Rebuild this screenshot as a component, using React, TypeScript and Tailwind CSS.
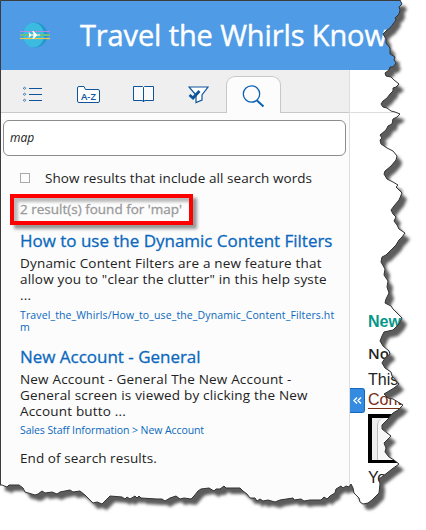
import React from "react";

const EDGE =
  "400,0 402,4 399,7 400,10 399,14 395,18 396,20 393,24 390,28 387,30 383,34 386,39 386,43 390,48 390,54 395,57 394,60 396,63 393,67 390,67 389,70 385,73 386,76 391,77 394,80 399,84 396,87 393,88 393,91 390,94 387,98 383,101 381,104 383,107 387,108 391,111 395,112 400,114 397,117 393,119 392,124 388,126 386,130 380,135 382,138 380,140 381,144 387,148 393,151 397,156 396,160 391,166 385,171 384,174 387,179 393,182 398,185 396,187 399,190 402,193 399,200 394,206 391,210 393,214 396,217 394,221 397,225 399,229 405,233 402,237 399,240 396,245 391,250 386,255 382,257 381,262 385,269 384,275 388,281 387,287 389,293 386,299 385,303 391,306 393,309 398,314 402,318 399,324 393,330 384,332 382,336 380,341 383,346 389,351 390,354 385,358 382,363 385,368 391,372 392,376 399,384 394,388 384,394 388,398 393,399 403,405 398,410 393,413 388,419 382,425 382,429 387,433 391,436 388,439 384,443 386,448 385,452 389,457 394,460 399,464 392,469 387,473 379,479 380,484 379,493 372,500 368,503 363,504 360,502 359,498 354,493 353,488 351,484 349,487 346,486 343,488 341,486 336,489 335,493 330,496 327,499 324,497 321,500 310,500 304,501 301,499 294,500 293,498 280,500 275,502 268,500 263,501 260,499 257,501 255,498 250,498 247,494 243,491 240,488 226,488 224,486 220,489 216,489 214,491 209,488 201,489 198,491 194,496 191,499 184,498 180,499 176,496 170,498 165,501 162,499 157,499 141,498 139,496 137,498 135,496 130,499 127,497 125,499 122,497 110,496 106,500 102,504 97,502 93,503 88,498 85,495 80,491 73,492 70,490 60,492 57,494 52,492 45,493 42,491 38,494 35,495 25,492 23,488 19,485 9,485 7,487 2,485 0,485";

function TornEdge() {
  return (
    <svg className="pointer-events-none absolute inset-0" width="426" height="530" viewBox="0 0 426 530">
      <defs>
        <filter id="soft" x="-5%" y="-5%" width="110%" height="110%">
          <feGaussianBlur stdDeviation="1.5" />
        </filter>
        <clipPath id="outside">
          <path clipRule="evenodd" d={`M-5-5H435V540H-5Z M0,0L${EDGE}Z`} />
        </clipPath>
      </defs>
      <g clipPath="url(#outside)">
        <rect width="426" height="530" fill="#fff" />
        <path d={`M3,3L${EDGE}Z`} transform="translate(5 6)" fill="#5c5c5c" filter="url(#soft)" />
      </g>
      <polyline points={EDGE} fill="none" stroke="#333" strokeWidth="1" />
      <path d="M.5 485V.5H400" fill="none" stroke="#3c3c3c" />
    </svg>
  );
}

function Logo() {
  return (
    <svg className="shrink-0" width="30" height="26" viewBox="0 0 30 26">
      <circle cx="15" cy="13" r="12.5" fill="#2398ca" />
      <ellipse cx="13.5" cy="13" rx="10.5" ry="12.3" fill="#3bbbe0" />
      <path d="M0 9.5H30" stroke="#b58be0" />
      <path d="M0 13H30" stroke="#70bf83" strokeWidth="2" />
      <path d="M0 16.5H30" stroke="#f6c744" strokeWidth="1.2" />
      <path d="M8.500 10.500h1l1.700 1.900h2.500L12.200 9h1.300l3.500 3.400h2.800q1.200.6 0 1.200h-2.800l-3.500 3.400h-1.300l1.500-3.400h-2.500l-1.700 1.900H8.500l.7-2.500Z" fill="#fff" />
    </svg>
  );
}

const ListIcon = () => (
  <svg width="20" height="16" viewBox="0 0 20 16" fill="none" stroke="#0e549c">
    <path d="M6 2.500H19M6 8.500H19M6 14.500H19" />
    <path d="M1.500 1l1.200 1.200-1.200 1.200L.3 2.200ZM1.500 7l1.200 1.200-1.200 1.200L.3 8.200ZM1.500 13l1.200 1.200-1.200 1.200L.3 14.200Z" strokeWidth=".8" />
  </svg>
);
const IndexIcon = () => (
  <svg width="23" height="18" viewBox="0 0 23 18">
    <path d="M.5 15V2Q.5.5 2 .5H7L8.500 3.500H21Q22.500 3.500 22.500 5V15Q22.500 16.500 21 16.500H2Q.5 16.500 .5 15Z" fill="#fff" stroke="#0e549c" />
    <text x="4" y="13.500" fontFamily="Open Sans, sans-serif" fontSize="9.500" fontWeight="600" textLength="15" lengthAdjust="spacingAndGlyphs" fill="#0e549c">A-Z</text>
  </svg>
);
const BookIcon = () => (
  <svg width="22" height="17" viewBox="0 0 22 17">
    <path d="M.5.5H9.500L10.500 1.500L11.500.5H20.500V14.500H11.500L10.500 16L9.500 14.500H.5Z M10.500 1.500V16" fill="#fafafa" stroke="#0e549c" />
  </svg>
);
const FilterIcon = () => (
  <svg width="21" height="18" viewBox="0 0 21 18" fill="none" stroke="#0e549c">
    <path d="M1 1H20L14 9V14L8 16.500V9Z" fill="#fff" strokeWidth="1.200" />
    <path d="M1.500 9L5 12L11.500 5" strokeWidth="2.800" />
  </svg>
);
const SearchIcon = () => (
  <svg width="23" height="23" viewBox="0 0 23 23" fill="none" stroke="#0b61b5">
    <circle cx="9.500" cy="9" r="8.200" strokeWidth="1.300" />
    <path d="M15 15.500L21.500 21.500" strokeWidth="2" />
  </svg>
);

export default function App() {
  return (
    <div className="relative h-[530px] w-[426px] overflow-hidden bg-white font-['Open_Sans',sans-serif] text-[#222]">
      <header className="flex h-[70px] items-center bg-[#4f9be6] pl-5">
        <Logo />
        <h1 className="ml-[30px] whitespace-nowrap text-[29px] leading-[70px] tracking-[-0.12px] text-white [-webkit-text-stroke:0.4px_#fff]">Travel the Whirls Know</h1>
      </header>
      <div className="flex h-[460px]">
        <aside className="h-full w-[350px] shrink-0 border-r border-[#ddd] bg-[#fcfcfc]">
          <nav className="flex h-[43px] items-start border-b border-[#c8c8c8] bg-[#efefef]">
            <button className="ml-[23px] mt-4"><ListIcon /></button>
            <button className="ml-[34px] mt-4"><IndexIcon /></button>
            <button className="ml-[33px] mt-4"><BookIcon /></button>
            <button className="ml-[33px] mt-4"><FilterIcon /></button>
            <button className="ml-[17px] mt-[6px] flex h-[37px] w-[55px] items-start justify-center rounded-t-[9px] border border-b-0 border-[#c8c8c8] bg-[#fcfcfc] pt-2"><SearchIcon /></button>
          </nav>
          <div className="ml-[3px] mt-[7px] flex h-9 w-[343px] items-center rounded-[6px] border border-[#8c8c8c] bg-white pl-[6px] text-[12px] italic">map</div>
          <div className="ml-5 mt-[14px] flex h-4 items-center">
            <span className="h-[10px] w-[10px] border border-[#aaa]" />
            <span className="ml-[15px] whitespace-nowrap text-[13.5px] leading-4 tracking-[0.08px]">Show results that include all search words</span>
          </div>
          <div className="ml-[10px] mt-2 h-[31px] w-[183px] whitespace-nowrap border-4 border-[#f00] pl-[6px] text-[13.5px] leading-[23px] text-[#999] shadow-[4px_4px_3px_#999,inset_4px_4px_3px_#bbb] [-webkit-text-stroke:0.3px_#999]">2 result(s) found for 'map'</div>
          <div className="ml-5 w-[324px] pt-1 text-[13.5px] leading-4 tracking-[0.18px]">
            <h2 className="whitespace-nowrap text-[17px] leading-6 tracking-[-0.02px] text-[#0b68bd] [-webkit-text-stroke:0.3px_#0b68bd]">How to use the Dynamic Content Filters</h2>
            <p className="mt-[2px] whitespace-pre">{"Dynamic Content Filters are a new feature that\nallow you to \"clear the clutter\" in this help syste\n..."}</p>
            <p className="mt-[6px] whitespace-pre text-[10.5px] leading-[12px] tracking-[0.12px] text-[#0b68bd]">{"Travel_the_Whirls/How_to_use_the_Dynamic_Content_Filters.ht\nm"}</p>
            <h2 className="mt-3 text-[17px] leading-6 tracking-[-0.02px] text-[#0b68bd] [-webkit-text-stroke:0.3px_#0b68bd]">New Account - General</h2>
            <p className="mt-[2px] whitespace-pre">{"New Account - General The New Account -\nGeneral screen is viewed by clicking the New\nAccount butto ..."}</p>
            <p className="mt-1 text-[10.5px] leading-[14px] tracking-[-0.08px] text-[#0b68bd]">Sales Staff Information &gt; New Account</p>
            <p className="mt-[13px] tracking-[0.08px]">End of search results.</p>
          </div>
        </aside>
        <main className="h-full min-w-0 flex-1 overflow-hidden whitespace-nowrap font-['Liberation_Sans',sans-serif] text-[16px]">
          <div className="h-[43px] border-b border-[#ddd]" />
          <div className="flex">
            <button className="mt-[275px] flex h-[25px] w-[15px] shrink-0 items-center justify-center rounded-r-[3px] border border-l-0 border-[#1468bd] bg-[#358be0]">
              <svg width="9" height="7" viewBox="0 0 9 7" fill="none" stroke="#fff" strokeWidth="1.400"><path d="M4 .5L1 3.500L4 6.500M8 .5L5 3.500L8 6.500" /></svg>
            </button>
            <div className="ml-[3px] pt-[199px]">
              <h3 className="text-[16px] font-bold leading-5 text-[#079789]">New</h3>
              <p className="mt-[11px] font-['Open_Sans',sans-serif] text-[15px] font-semibold leading-5">Not</p>
              <p className="mt-[7px] leading-5">This</p>
              <p className="mt-[1px] h-[18px] w-[50px] border-b border-[#762c15] leading-[18px] text-[#762c15]">Cont</p>
              <div className="mt-[5px] h-[49px] w-[50px] border-4 border-b-[3px] border-r-0 border-black bg-[#eee] pl-[5px]">
                <div className="h-full rounded-tl-[7px] border-l border-[#bbb] bg-[#f7f7f7]" />
              </div>
              <p className="mt-[5px] leading-5">You</p>
            </div>
          </div>
        </main>
      </div>
      <TornEdge />
    </div>
  );
}
